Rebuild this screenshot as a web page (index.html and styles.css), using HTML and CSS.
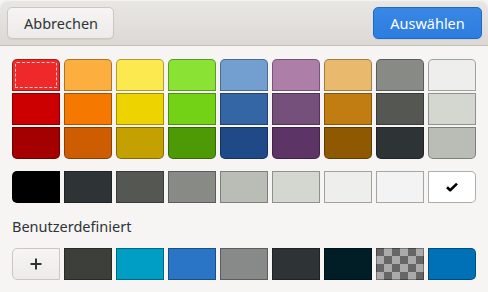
FILE: index.html
```html
<!DOCTYPE html>
<html lang="de">
<head>
<meta charset="utf-8">
<title>Farbe wählen</title>
<link rel="stylesheet" href="styles.css">
</head>
<body>
  <div class="dialog">
    <div class="headerbar">
      <button class="btn">Abbrechen</button>
      <button class="btn suggested">Auswählen</button>
    </div>

    <div class="content">
      <div class="palette">
        <div class="col">
          <div class="swatch focus" style="background:#ef2929"></div>
          <div class="swatch" style="background:#cc0000"></div>
          <div class="swatch" style="background:#a40000"></div>
        </div>
        <div class="col">
          <div class="swatch" style="background:#fcaf3e"></div>
          <div class="swatch" style="background:#f57900"></div>
          <div class="swatch" style="background:#ce5c00"></div>
        </div>
        <div class="col">
          <div class="swatch" style="background:#fce94f"></div>
          <div class="swatch" style="background:#edd400"></div>
          <div class="swatch" style="background:#c4a000"></div>
        </div>
        <div class="col">
          <div class="swatch" style="background:#8ae234"></div>
          <div class="swatch" style="background:#73d216"></div>
          <div class="swatch" style="background:#4e9a06"></div>
        </div>
        <div class="col">
          <div class="swatch" style="background:#729fcf"></div>
          <div class="swatch" style="background:#3465a4"></div>
          <div class="swatch" style="background:#204a87"></div>
        </div>
        <div class="col">
          <div class="swatch" style="background:#ad7fa8"></div>
          <div class="swatch" style="background:#75507b"></div>
          <div class="swatch" style="background:#5c3566"></div>
        </div>
        <div class="col">
          <div class="swatch" style="background:#e9b96e"></div>
          <div class="swatch" style="background:#c17d11"></div>
          <div class="swatch" style="background:#8f5902"></div>
        </div>
        <div class="col">
          <div class="swatch" style="background:#888a85"></div>
          <div class="swatch" style="background:#555753"></div>
          <div class="swatch" style="background:#2e3436"></div>
        </div>
        <div class="col">
          <div class="swatch" style="background:#eeeeec"></div>
          <div class="swatch" style="background:#d3d7cf"></div>
          <div class="swatch" style="background:#babdb6"></div>
        </div>
      </div>

      <div class="row">
        <div class="swatch" style="background:#000000"></div>
        <div class="swatch" style="background:#2e3436"></div>
        <div class="swatch" style="background:#555753"></div>
        <div class="swatch" style="background:#888a85"></div>
        <div class="swatch" style="background:#babdb6"></div>
        <div class="swatch" style="background:#d3d7cf"></div>
        <div class="swatch" style="background:#eeeeec"></div>
        <div class="swatch" style="background:#f3f3f3"></div>
        <div class="swatch selected" style="background:#ffffff">
          <svg width="12" height="10" viewBox="0 0 12 10"><path d="M1 5.2 L4.2 8.2 L11 1.6" fill="none" stroke="#000" stroke-width="2.6" stroke-linejoin="round"/></svg>
        </div>
      </div>

      <div class="label">Benutzerdefiniert</div>

      <div class="row">
        <button class="add">
          <svg width="12" height="12" viewBox="0 0 12 12"><path d="M6 0.5 V11.5 M0.5 6 H11.5" stroke="#2e3436" stroke-width="2"/></svg>
        </button>
        <div class="swatch" style="background:#3d3f3b"></div>
        <div class="swatch" style="background:#009dc5"></div>
        <div class="swatch" style="background:#2a75c6"></div>
        <div class="swatch" style="background:#888a89"></div>
        <div class="swatch" style="background:#2e3436"></div>
        <div class="swatch" style="background:#011d25"></div>
        <div class="swatch checker"></div>
        <div class="swatch" style="background:#0071b6"></div>
      </div>
    </div>
  </div>
</body>
</html>
```

FILE: styles.css
```css
body { margin:0; background:#f6f5f4; font-family:"Noto Sans",sans-serif; color:#2e3436; }

.dialog { width:488px; height:292px; overflow:hidden; }

.headerbar { display:flex; justify-content:space-between; align-items:flex-start;
             height:45px; padding:0 6px 0 7px; box-sizing:border-box;
             background:linear-gradient(#e9e7e4, #dcd9d5);
             border-bottom:1px solid #c3beb9; border-radius:8px 8px 0 0;
             box-shadow:inset 0 1px #f4f3f1; height:46px; }

.btn { margin-top:7px; height:32px; box-sizing:border-box; padding:0 16px;
       font:14.5px "Noto Sans",sans-serif; color:#2e3436;
       border:1px solid #cdc7c2; border-radius:5px;
       background:linear-gradient(#f6f5f4, #edebe9);
       box-shadow:0 1px 1px rgba(0,0,0,0.06); }
.btn:first-child { width:107px; }
.btn.suggested { width:109px; color:#fff; border-color:#1b6acb;
                 background:linear-gradient(#3987e5, #2c7de0); }

.content { padding:13px 12px; }

.palette { display:flex; gap:4px; }
.col { display:flex; flex-direction:column; gap:2px; }

.swatch { width:48px; height:32px; box-sizing:border-box;
          border:1px solid rgba(0,0,0,0.32); position:relative;
          display:flex; align-items:center; justify-content:center; }
.col .swatch:first-child { border-radius:5px 5px 0 0; }
.col .swatch:last-child { border-radius:0 0 5px 5px; }

.row { display:flex; gap:4px; }
.row > :first-child { border-radius:5px 0 0 5px; }
.row > :last-child { border-radius:0 5px 5px 0; }
.palette + .row { margin-top:12px; }

.focus { outline:1px dashed rgba(255,255,255,0.75); outline-offset:-4px; }

.label { font-size:14.5px; margin:13px 0 12px; line-height:20px; }

.add { width:48px; height:32px; padding:0; box-sizing:border-box;
       display:flex; align-items:center; justify-content:center;
       border:1px solid #cdc7c2; background:linear-gradient(#f6f5f4, #edebe9); }

.checker { background-color:#666;
           background-image:
             linear-gradient(45deg, #aaa 25%, transparent 25%, transparent 75%, #aaa 75%),
             linear-gradient(45deg, #aaa 25%, transparent 25%, transparent 75%, #aaa 75%);
           background-size:16px 16px; background-position:-1px -1px, 7px 7px; }
```
